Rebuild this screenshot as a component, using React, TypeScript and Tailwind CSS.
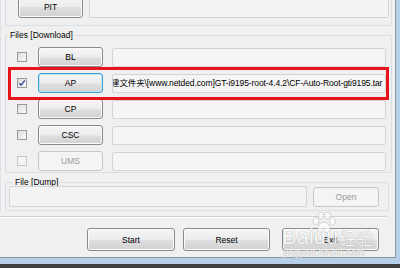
import React from 'react'

const font = { fontFamily: '"Liberation Sans", "Noto Sans CJK SC", sans-serif' }

function WinButton({ label, className = '', focused = false, disabled = false }: { label: string; className?: string; focused?: boolean; disabled?: boolean }) {
  if (disabled) {
    return (
      <div className={`flex items-center justify-center rounded-[3px] border border-[#c5c8ca] bg-[#f4f4f4] text-[#9a9a9a] ${className}`}>
        {label}
      </div>
    )
  }
  return (
    <div
      className={`flex items-center justify-center rounded-[3px] border bg-[linear-gradient(to_bottom,#f6f6f6_0%,#ececec_50%,#dedede_55%,#d2d2d2_100%)] text-black ${
        focused ? 'border-[#3b9ed8] shadow-[inset_0_0_0_1px_#bfe6f7]' : 'border-[#8a8a8a] shadow-[inset_0_0_0_1px_#fbfbfb]'
      } ${className}`}
    >
      {label}
    </div>
  )
}

function Check({ checked = false, disabled = false }: { checked?: boolean; disabled?: boolean }) {
  return (
    <div
      className={`flex h-[10px] w-[10px] items-center justify-center border ${
        disabled ? 'border-[#c6c6c6] bg-[#f4f4f4]' : 'border-[#9a9a9a] bg-[linear-gradient(135deg,#dcdcdc,#fbfbfb)]'
      }`}
    >
      {checked && (
        <svg width="8" height="8" viewBox="0 0 8 8">
          <path d="M1.3 4.2 L3.2 6.2 L6.8 1.4" fill="none" stroke="#3a4f8f" strokeWidth="1.4" />
        </svg>
      )}
    </div>
  )
}

function Field({ children, className = '' }: { children?: React.ReactNode; className?: string }) {
  return (
    <div className={`flex items-center overflow-hidden rounded-[2px] border border-[#d4d4d4] bg-[#f3f3f3] ${className}`}>
      {children}
    </div>
  )
}

const rows = [
  { name: 'BL' },
  { name: 'AP', checked: true, focused: true, value: '建文件夹\\[www.netded.com]GT-i9195-root-4.4.2\\CF-Auto-Root-gti9195.tar' },
  { name: 'CP' },
  { name: 'CSC' },
  { name: 'UMS', disabled: true },
]

function Paw() {
  return (
    <svg width="26" height="22" viewBox="0 0 26 22">
      <g fill="#ffffff" stroke="#c8c8c8" strokeWidth="1">
        <ellipse cx="5" cy="9" rx="3" ry="3.6" />
        <ellipse cx="10" cy="3.6" rx="3" ry="3.4" />
        <ellipse cx="16.5" cy="3.6" rx="3" ry="3.4" />
        <ellipse cx="21.5" cy="9" rx="3" ry="3.6" />
        <path d="M13 10 C9 10 6 15 6.5 18 C7 21 10 20.5 13 20 C16 20.5 19 21 19.5 18 C20 15 17 10 13 10 Z" />
      </g>
    </svg>
  )
}

export default function App() {
  return (
    <div className="h-[268px] w-[400px] overflow-hidden bg-[#3f3f3f] text-[8.5px] leading-[10px]" style={font}>
      <div className="relative h-[264px] w-[400px] bg-[#b7cfe8]">
        <div className="h-[258px] w-[396px] border-b border-r border-[#8d99a6] bg-[#f0f0f0]">
          <div className="border-l border-[#dde3e8] pl-[4px]">
            {/* PIT group (cut at top) */}
            <div className="flex h-[26px] w-[387px] gap-[6px] overflow-hidden rounded-b-[3px] border-x border-b border-[#d5dfe5] pl-[12px]">
              <WinButton label="PIT" className="mt-[-5px] h-[23px] w-[65px]" />
              <Field className="mt-[-5px] h-[23px] w-[300px]" />
            </div>

            {/* Files [Download] */}
            <fieldset className="mt-[4px] w-[387px] rounded-[3px] border border-[#d5dfe5] pb-[1px] pt-[7px]">
              <legend className="ml-[2px] px-[2px] text-black">Files [Download]</legend>
              <div className="flex flex-col gap-[6px]">
                {rows.map((r) => (
                  <div key={r.name} className="flex h-[20px] items-center pl-[11px]">
                    <Check checked={r.checked} disabled={r.disabled} />
                    <WinButton label={r.name} focused={r.focused} disabled={r.disabled} className="ml-[11px] h-[20px] w-[65px]" />
                    <Field className="ml-[9px] h-[19px] w-[274px] bg-[#f5f5f5]">
                      {r.value && <span className="ml-[-2px] whitespace-nowrap text-[8.5px] tracking-[-0.1px] text-black">{r.value}</span>}
                    </Field>
                  </div>
                ))}
              </div>
            </fieldset>

            {/* File [Dump] */}
            <fieldset className="mt-[4px] w-[384px] rounded-[3px] border border-[#d5dfe5] pb-[3px]">
              <legend className="ml-[7px] pl-[2px] pr-[1px] text-black">File [Dump]</legend>
              <div className="mt-[-1px] flex items-center gap-[6px] pl-[3px]">
                <Field className="h-[21px] w-[298px]" />
                <WinButton label="Open" disabled className="h-[20px] w-[66px]" />
              </div>
            </fieldset>
          </div>

          <div className="mt-[5px] h-[2px] w-[386px] border-b border-t border-b-white border-t-[#cfcfcf]" />

          <div className="mt-[10px] flex pl-[87px]">
            <WinButton label="Start" className="h-[23px] w-[88px]" />
            <WinButton label="Reset" className="ml-[8px] h-[23px] w-[87px]" />
            <WinButton label="Exit" className="ml-[12px] h-[23px] w-[97px]" />
          </div>
        </div>

        {/* red annotation box */}
        <div className="absolute left-[8px] top-[67px] h-[33px] w-[381px] border-[3px] border-[#e8141b]" />

        {/* Baidu watermark */}
        <div className="pointer-events-none absolute left-[282px] top-[212px] opacity-70">
          <div className="ml-[29px]">
            <Paw />
          </div>
          <div className="mt-[-7px] flex items-end text-white [text-shadow:0_0_1px_#9a9a9a,0_0_1px_#9a9a9a]">
            <span className="text-[22px] leading-[20px]" style={{ fontFamily: '"Liberation Sans", sans-serif' }}>Baidu</span>
            <span className="ml-[1px] text-[17px] leading-[18px]" style={{ fontFamily: '"Noto Sans CJK SC", sans-serif' }}>经验</span>
          </div>
          <div className="ml-[2px] mt-[1px] text-[10px] leading-[10px] text-white [text-shadow:0_0_1px_#9a9a9a,0_0_1px_#9a9a9a]">jingyan.baidu.com</div>
        </div>
      </div>
    </div>
  )
}
